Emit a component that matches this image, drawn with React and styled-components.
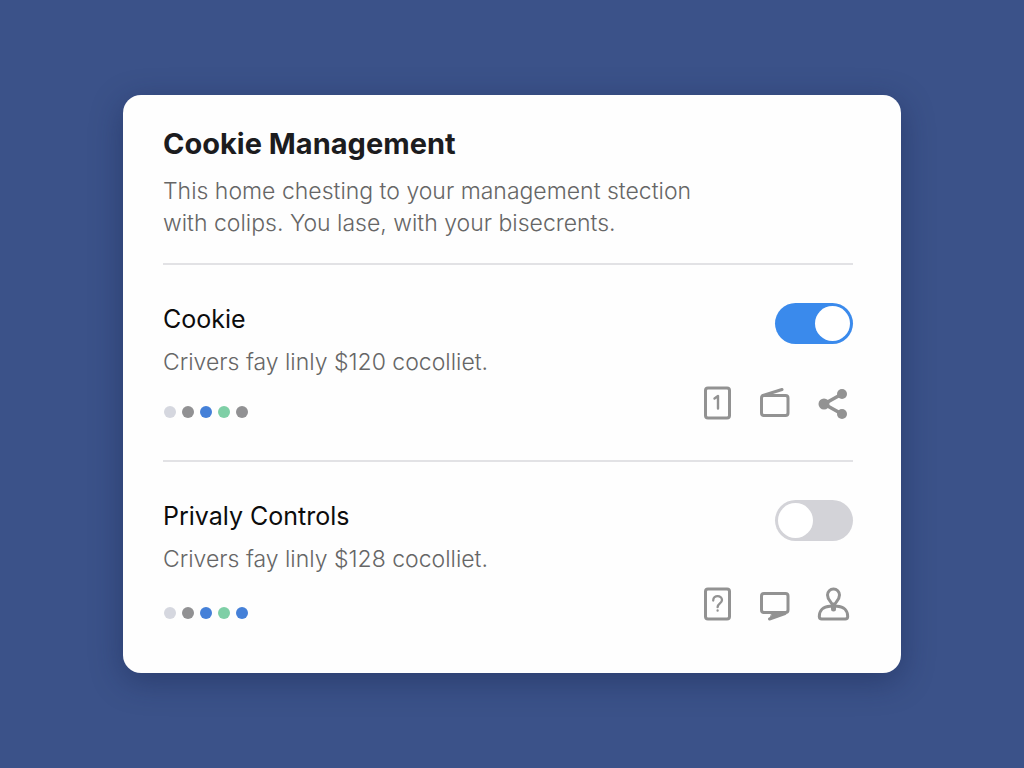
import React, { useState } from "react";
import styled, { createGlobalStyle } from "styled-components";

const GlobalStyle = createGlobalStyle`
  * {
    box-sizing: border-box;
  }
  body {
    margin: 0;
    background: #3b5289;
    font-family: Inter, "Liberation Sans", sans-serif;
  }
`;
const Page = styled.main`
  display: flex;
  align-items: center;
  justify-content: center;
  min-height: 100vh;
  padding: 24px;
`;
const Card = styled.div`
  width: 100%;
  max-width: 778px;
  padding: 31px 48px 12px 40px;
  border-radius: 18px;
  background: #fefefe;
  box-shadow: 0 8px 32px rgba(18, 30, 70, 0.4);
`;
const Header = styled.header`
  padding-bottom: 24px;
`;
const Title = styled.h1`
  margin: 0 0 13px;
  color: #1c1c1e;
  font-size: 29px;
  line-height: 36px;
  font-weight: 700;
`;
const Text = styled.p`
  max-width: 560px;
  margin: 0;
  color: #666;
  font-size: 23px;
  line-height: 32px;
  font-weight: 300;
`;
const Section = styled.section`
  padding: 38px 0 40px;
  border-top: 2px solid #e2e2e5;
`;
const Row = styled.div`
  display: flex;
  align-items: flex-start;
  justify-content: space-between;
`;
const Footer = styled(Row)`
  align-items: flex-end;
  margin-top: ${(props) => props.$gap}px;
`;
const Name = styled.h2`
  margin: 0 0 11px;
  color: #0c0c0c;
  font-size: 25px;
  line-height: 32px;
  font-weight: 400;
`;
const Switch = styled.input`
  appearance: none;
  display: flex;
  align-items: center;
  flex: none;
  width: 78px;
  height: 41px;
  margin: 0;
  padding: 0 3px;
  border-radius: 21px;
  background: #d3d3d8;
  cursor: pointer;

  &::before {
    content: "";
    width: 35px;
    height: 35px;
    border-radius: 50%;
    background: #fff;
  }
  &:checked {
    justify-content: flex-end;
    background: #3a8aec;
  }
`;
const Dots = styled.div`
  display: flex;
  gap: 6px;
  padding: 0 0 2px 1px;
`;
const Dot = styled.span`
  width: 12px;
  height: 12px;
  border-radius: 50%;
  background: ${(props) => props.$color};
`;
const Actions = styled.div`
  display: flex;
  gap: 24px;
  padding-right: 2px;
`;
const IconButton = styled.button`
  width: 34px;
  height: 34px;
  padding: 0;
  border: 0;
  background: none;
  color: #929292;
  cursor: pointer;
`;
const Svg = styled.svg`
  display: block;
  width: 34px;
  height: 34px;
  fill: none;
  stroke: currentColor;
  stroke-width: 3;
  stroke-linecap: round;
  stroke-linejoin: round;
`;

const icons = {
  page: (
    <>
      <rect x="4.500" y="2" width="24" height="30" rx="2.5" />
      <path d="M13.500 12.500l3.500-2.500v12.500" strokeWidth="2.4" />
    </>
  ),
  wallet: (
    <>
      <rect x="2.500" y="9.500" width="26.5" height="20" rx="2.5" />
      <path d="M4 9.500L23 3.500" />
    </>
  ),
  share: (
    <>
      <path d="M25 8L7 18l18 10" strokeWidth="3.6" />
      <circle cx="7" cy="18" r="5.5" fill="currentColor" stroke="none" />
      <circle cx="25" cy="8" r="5" fill="currentColor" stroke="none" />
      <circle cx="25" cy="28" r="5" fill="currentColor" stroke="none" />
    </>
  ),
  help: (
    <>
      <rect x="4.500" y="2" width="24" height="30" rx="2.5" />
      <path
        d="M12.200 13.500c0-6 8.800-5.500 8.800-.5 0 3.500-4.400 3.200-4.400 7.200M16.600 23.500v.2"
        strokeWidth="2.3"
      />
    </>
  ),
  screen: (
    <>
      <rect x="2.500" y="6.500" width="26.5" height="19" rx="2.5" />
      <path d="M26 26.500L10.500 32" />
      <path d="M13 26.500h8L11.500 31z" fill="currentColor" strokeWidth="1" />
    </>
  ),
  person: (
    <>
      <path d="M15.500 18.500c-.5-3.200-5-5.500-5-10.500a6 6 0 0 1 12 0c0 5-4.500 7.300-5 10.500z" />
      <path d="M13 19.300C6 19.500 2.300 23.500 2.300 29.500q0 2.500 2.500 2.500h23.400q2.500 0 2.500-2.500c0-6-3.700-10-10.700-10.200z" />
      <path d="M16.500 18v4" strokeWidth="5" />
    </>
  ),
};

const settings = [
  {
    id: "cookie",
    name: "Cookie",
    text: "Crivers fay linly $120 cocolliet.",
    on: true,
    gap: 8,
    dots: ["#d5d7df", "#919193", "#4580d8", "#7ecfa6", "#919193"],
    actions: ["page", "wallet", "share"],
  },
  {
    id: "privacy",
    name: "Privaly Controls",
    text: "Crivers fay linly $128 cocolliet.",
    on: false,
    gap: 12,
    dots: ["#d5d7df", "#919193", "#4580d8", "#7ecfa6", "#4580d8"],
    actions: ["help", "screen", "person"],
  },
];

const Setting = ({ item }) => {
  const [on, setOn] = useState(item.on);
  return (
    <Section>
      <Row>
        <div>
          <Name>
            <label htmlFor={item.id}>{item.name}</label>
          </Name>
          <Text>{item.text}</Text>
        </div>
        <Switch
          id={item.id}
          type="checkbox"
          role="switch"
          checked={on}
          onChange={() => setOn(!on)}
        />
      </Row>
      <Footer $gap={item.gap}>
        <Dots>
          {item.dots.map((color, idx) => (
            <Dot key={idx} $color={color} />
          ))}
        </Dots>
        <Actions>
          {item.actions.map((name) => (
            <IconButton key={name} type="button" aria-label={name}>
              <Svg viewBox="0 0 34 34">{icons[name]}</Svg>
            </IconButton>
          ))}
        </Actions>
      </Footer>
    </Section>
  );
};

const App = () => {
  return (
    <Page>
      <GlobalStyle />
      <Card>
        <Header>
          <Title>Cookie Management</Title>
          <Text>
            This home chesting to your management stection with colips. You
            lase, with your bisecrents.
          </Text>
        </Header>
        {settings.map((item) => (
          <Setting key={item.id} item={item} />
        ))}
      </Card>
    </Page>
  );
};

export default App;
